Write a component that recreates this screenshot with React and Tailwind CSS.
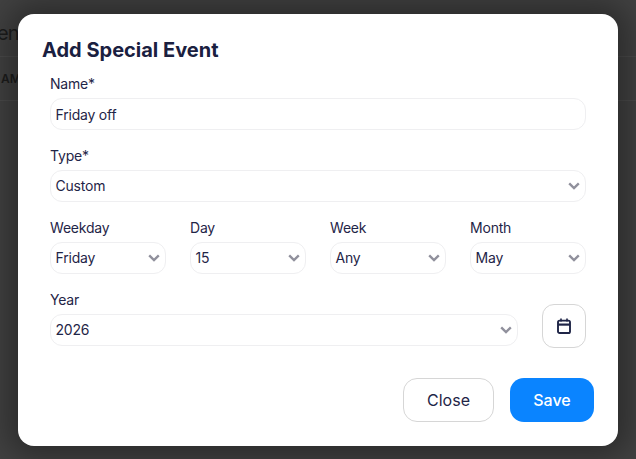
import React from "react";

const Chevron = () => (
  <svg viewBox="0 0 12 8" className="h-2 w-3" fill="none" stroke="#90909c" strokeWidth="2.4">
    <path d="M1.2 1.4 6 6l4.8-4.6" />
  </svg>
);

const SelectBox = ({ value }) => (
  <div className="flex h-8 w-full items-center justify-between rounded-[12px] border-[1.5px] border-[#efeff1] bg-white pl-[4.5px] pr-[5px] text-sm tracking-[-0.2px] text-[#1f2547]">
    <span>{value}</span>
    <Chevron />
  </div>
);

const Field = ({ label, children, className = "" }) => (
  <div className={`flex flex-col gap-1 ${className}`}>
    <label className="h-5 text-sm leading-5 tracking-[-0.2px] text-[#1f2547]">{label}</label>
    {children}
  </div>
);

const CalendarIcon = () => (
  <svg viewBox="0 0 14 16" className="h-4 w-[14px]" fill="none" stroke="#1f2547" strokeWidth="1.9">
    <rect x="1" y="2.6" width="12" height="12.4" rx="1.6" />
    <path d="M1 6.6h12" strokeWidth="2.2" />
    <path d="M4 0.4v3M10 0.4v3" strokeWidth="1.6" />
  </svg>
);

export default function App() {
  return (
    <div className="relative h-[459px] w-[636px] overflow-hidden bg-[#414141] font-['Inter',sans-serif]">
      {/* page behind the modal */}
      <div className="flex h-[57px] items-end border-b border-[#4a4a4a] pb-[9px] text-xl tracking-[-1px] text-[#1c1c1c]">
        <span className="-ml-[3px]">ent</span>
      </div>
      <div className="flex h-[44px] items-center border-b border-[#4a4a4a] text-xs font-semibold text-[#1c1c1c]">
        <span className="pl-[1px]">AM</span>
      </div>

      <div className="absolute left-[18px] top-[14px] w-[600px] rounded-[16px] bg-white pb-6 pl-6 pr-6 pt-[22px] shadow-[0_0_30px_10px_rgba(0,0,0,0.35)]">
        <h2 className="mb-[10px] h-7 text-xl font-bold leading-7 text-[#1a2040]">Add Special Event</h2>
        <div className="flex flex-col gap-4 px-2">
          <Field label="Name*">
            <div className="flex h-8 items-center rounded-[12px] border-[1.5px] border-[#efeff1] pl-[4.5px] text-sm tracking-[-0.2px] text-[#1f2547]">
              <span className="translate-y-[1px]">Friday off</span>
            </div>
          </Field>
          <Field label="Type*">
            <SelectBox value="Custom" />
          </Field>
          <div className="grid grid-cols-4 gap-6">
            <Field label="Weekday">
              <SelectBox value="Friday" />
            </Field>
            <Field label="Day">
              <SelectBox value="15" />
            </Field>
            <Field label="Week">
              <SelectBox value="Any" />
            </Field>
            <Field label="Month">
              <SelectBox value="May" />
            </Field>
          </div>
          <div className="flex items-start gap-6">
            <Field label="Year" className="flex-1">
              <SelectBox value="2026" />
            </Field>
            <button className="mt-[14px] flex h-11 w-11 items-center justify-center rounded-[12px] border border-[#d6d6d6] bg-white">
              <CalendarIcon />
            </button>
          </div>
        </div>
        <div className="mt-[30px] flex justify-end gap-4">
          <button className="h-11 w-[91px] rounded-[14px] border border-[#d6d6d6] bg-white text-base text-[#1f2547]">
            Close
          </button>
          <button className="h-11 w-[84px] rounded-[14px] bg-[#0a84ff] text-base font-medium text-white">
            Save
          </button>
        </div>
      </div>
    </div>
  );
}
